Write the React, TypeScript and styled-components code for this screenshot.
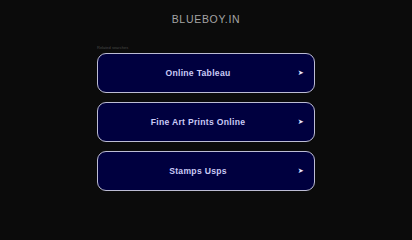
import styled, { createGlobalStyle } from "styled-components";

const GlobalStyle = createGlobalStyle`
  html, body {
    margin: 0;
    padding: 0;
    background: #0b0b0b;
  }
  body {
    font-family: "Liberation Sans", Arial, sans-serif;
  }
`;

const Page = styled.div`
  display: flex;
  flex-direction: column;
  align-items: center;
  height: 227px;
  box-sizing: border-box;
  padding-top: 12px;
`;

const Domain = styled.h1`
  margin: 0;
  font-size: 10.5px;
  font-weight: normal;
  letter-spacing: 0.7px;
  color: #a4a4a4;
  line-height: 14px;
`;

const Searches = styled.div`
  width: 218px;
  margin-top: 19px;
  display: flex;
  flex-direction: column;
`;

const Caption = styled.div`
  font-size: 4px;
  color: #4a4a4a;
  line-height: 5px;
  margin-bottom: 3px;
`;

const List = styled.div`
  display: flex;
  flex-direction: column;
  gap: 9px;
`;

const Link = styled.a`
  position: relative;
  display: flex;
  align-items: center;
  justify-content: center;
  height: 40px;
  box-sizing: border-box;
  padding-right: 16px;
  border: 1.5px solid #bcbcd4;
  border-radius: 9px;
  background: #00003f;
  color: #cacaf6;
  font-size: 8.6px;
  font-weight: bold;
  letter-spacing: 0.3px;
  text-decoration: none;
`;

const Arrow = styled.span`
  position: absolute;
  right: 10px;
  top: 50%;
  transform: translateY(-50%);
  font-family: "DejaVu Sans", sans-serif;
  font-size: 7px;
  color: #e6e6ff;
`;

const items = ["Online Tableau", "Fine Art Prints Online", "Stamps Usps"];

export default function App() {
  return (
    <>
      <GlobalStyle />
      <Page>
        <Domain>BLUEBOY.IN</Domain>
        <Searches>
          <Caption>Related searches</Caption>
          <List>
            {items.map((item) => (
              <Link key={item} href="#">
                {item}
                <Arrow>➤</Arrow>
              </Link>
            ))}
          </List>
        </Searches>
      </Page>
    </>
  );
}
